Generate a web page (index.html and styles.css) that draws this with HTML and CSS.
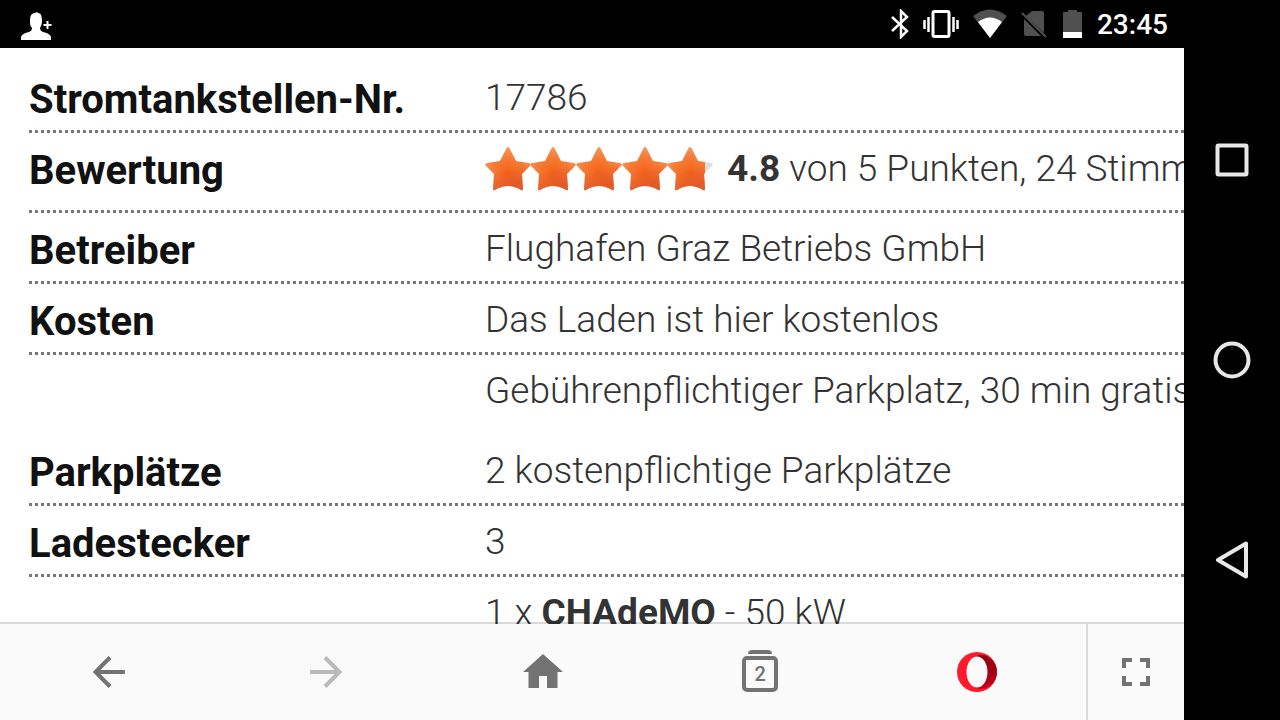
FILE: index.html
```html
<!DOCTYPE html>
<html lang="de">
  <head>
    <meta charset="UTF-8" />
    <meta name="viewport" content="width=device-width, initial-scale=1.0" />
    <title>Stromtankstelle 17786</title>
    <link rel="stylesheet" href="styles.css">
  </head>
  <body>
    <div class="screen">
      <header class="status-bar">
        <svg width="34" height="32" viewBox="0 0 34 32" fill="#fff">
          <path d="M1 32v-3c1-3 4-4 8-5 2-1 3-2 3-4-2-2-2-4-2-7 0-6 2-8 5-8l2-1 1 1c3 0 4 3 4 8 0 3-1 5-2 7 0 2 1 3 3 4 4 1 7 2 8 5v3z" />
          <path d="M26.500 13h2v3h3v2h-3v3h-2v-3h-3v-2h3z" />
        </svg>
        <div class="status-icons">
          <svg width="18" height="30" viewBox="0 0 18 30" fill="none" stroke="#fff" stroke-width="2.500">
            <path d="M1 8l15 14-6 6V2l6 6L1 22" />
          </svg>
          <svg width="36" height="30" viewBox="0 0 36 30" fill="none" stroke="#fff" stroke-width="2.500">
            <rect x="10" y="2.500" width="16" height="25" rx="1.500" stroke-width="3" />
            <path d="M1.500 11v9M5.500 8v15M30.500 8v15M34.500 11v9" />
          </svg>
          <svg width="34" height="30" viewBox="0 0 34 30">
            <path d="M0 7q17-13 34 0L17 29z" fill="#505050" />
            <path d="M5 13q12-9 24 0L17 29z" fill="#fff" />
          </svg>
          <svg width="28" height="30" viewBox="0 0 28 30">
            <path d="M11 2h10q2 0 2 2v20L5 7zM3 10l17 17H5q-2 0-2-2z" fill="#505050" />
            <path d="M1 4l24 24" stroke="#505050" stroke-width="2" />
          </svg>
          <svg width="20" height="30" viewBox="0 0 20 30">
            <path d="M0 3h5V1h9v2h5v20H0z" fill="#505050" />
            <path d="M0 23h19v6H0z" fill="#fff" />
          </svg>
          <time class="clock">23:45</time>
        </div>
      </header>

      <main class="page">
        <table class="details">
          <tr>
            <th scope="row">Stromtankstellen-Nr.</th>
            <td>17786</td>
          </tr>
          <tr class="tall">
            <th scope="row">Bewertung</th>
            <td>
              <div class="rating">
                <svg class="stars" width="228" height="48" viewBox="0 0 228 48">
                  <defs>
                    <radialGradient id="orange" cx="0.5" cy="0.6" r="0.6">
                      <stop offset="0" stop-color="#f4611a" />
                      <stop offset="0.6" stop-color="#f57c36" />
                      <stop offset="1" stop-color="#f19a62" />
                    </radialGradient>
                    <linearGradient id="shade" x1="0" y1="0" x2="0.3" y2="1">
                      <stop offset="0.6" stop-color="#d94a22" stop-opacity="0" />
                      <stop offset="1" stop-color="#d94a22" stop-opacity="0.7" />
                    </linearGradient>
                    <path id="star" d="M21 4q2-4 4 0l6 12 13 2q3 1 1 3l-8 8 1 15q0 2-2 1-13-8-26 0-2 1-2-1l1-15-8-8q-2-2 1-3l13-2z" />
                    <clipPath id="score"><rect width="220" height="48" /></clipPath>
                  </defs>
                  <use href="#star" x="182" fill="#dcdfe2" />
                  <g clip-path="url(#score)" fill="url(#orange)">
                    <use href="#star" />
                    <use href="#star" x="45" />
                    <use href="#star" x="91" />
                    <use href="#star" x="137" />
                    <use href="#star" x="182" />
                  </g>
                  <g clip-path="url(#score)" fill="url(#shade)">
                    <use href="#star" />
                    <use href="#star" x="45" />
                    <use href="#star" x="91" />
                    <use href="#star" x="137" />
                    <use href="#star" x="182" />
                  </g>
                </svg>
                <span><b>4.8</b> von 5 Punkten, 24 Stimmen</span>
              </div>
            </td>
          </tr>
          <tr>
            <th scope="row">Betreiber</th>
            <td>Flughafen Graz Betriebs GmbH</td>
          </tr>
          <tr>
            <th scope="row">Kosten</th>
            <td>Das Laden ist hier kostenlos</td>
          </tr>
          <tr class="tall plain">
            <th></th>
            <td>Gebührenpflichtiger Parkplatz, 30 min gratis</td>
          </tr>
          <tr>
            <th scope="row">Parkplätze</th>
            <td>2 kostenpflichtige Parkplätze</td>
          </tr>
          <tr>
            <th scope="row">Ladestecker</th>
            <td>3</td>
          </tr>
          <tr class="plain">
            <th></th>
            <td>1 x <b>CHAdeMO</b> - 50 kW</td>
          </tr>
        </table>
      </main>

      <nav class="toolbar">
        <button aria-label="Zurück">
          <svg width="32" height="32" viewBox="0 0 32 32" fill="none" stroke="#737373" stroke-width="4">
            <path d="M17 1.500L2.500 16 17 30.500M3 16h29" />
          </svg>
        </button>
        <button aria-label="Vorwärts" disabled>
          <svg width="32" height="32" viewBox="0 0 32 32" fill="none" stroke="#b9b9b9" stroke-width="4">
            <path d="M15 1.500l14.500 14.500L15 30.500M29 16H0" />
          </svg>
        </button>
        <button aria-label="Startseite">
          <svg width="40" height="36" viewBox="0 0 40 36" fill="#737373">
            <path d="M20 0l20 18h-5.500v16H24V22h-8v12H5.500V18H0z" />
          </svg>
        </button>
        <button class="tabs" aria-label="2 Tabs">
          <span>2</span>
        </button>
        <button aria-label="Opera">
          <svg width="40" height="40" viewBox="0 0 40 40">
            <defs>
              <linearGradient id="dark" x1="0" y1="0" x2="0" y2="1">
                <stop offset="0" stop-color="#8c0010" />
                <stop offset="1" stop-color="#c1001c" />
              </linearGradient>
            </defs>
            <circle cx="20" cy="20" r="20" fill="#ff1b2d" />
            <path d="M18 5C24 1 31 4 34 7c8 7 8 19 0 26-3 3-10 6-16 2z" fill="url(#dark)" />
            <ellipse cx="20" cy="20" rx="10.500" ry="15.500" fill="#fafafa" />
          </svg>
        </button>
        <button class="fullscreen" aria-label="Vollbild">
          <svg width="28" height="28" viewBox="0 0 28 28" fill="none" stroke="#737373" stroke-width="4">
            <path d="M2 10V2h8M18 2h8v8M26 18v8h-8M10 26H2v-8" />
          </svg>
        </button>
      </nav>
    </div>

    <aside class="system-nav">
      <button aria-label="Übersicht">
        <svg width="34" height="34" viewBox="0 0 34 34" fill="none" stroke="#e8e8e8" stroke-width="4">
          <rect x="2.500" y="2.500" width="29" height="29" rx="1" />
        </svg>
      </button>
      <button aria-label="Home">
        <svg width="38" height="38" viewBox="0 0 38 38" fill="none" stroke="#e8e8e8" stroke-width="4">
          <circle cx="19" cy="19" r="16.500" />
        </svg>
      </button>
      <button aria-label="Zurück">
        <svg width="32" height="38" viewBox="0 0 32 38" fill="none" stroke="#e8e8e8" stroke-width="4" stroke-linejoin="round">
          <path d="M30 2.500v33L2 19z" />
        </svg>
      </button>
    </aside>
  </body>
</html>
```
FILE: styles.css
```css
body {
  margin: 0;
  display: flex;
  height: 100vh;
  background-color: #000;
  font-family: Roboto, sans-serif;
  overflow: hidden;
}

button {
  margin: 0;
  padding: 0;
  border: 0;
  background: none;
  font-family: inherit;
  display: flex;
  align-items: center;
  justify-content: center;
}

.screen {
  flex: 1;
  min-width: 0;
  display: flex;
  flex-direction: column;
  background-color: #fff;
}

/* Android status bar */
.status-bar {
  display: flex;
  align-items: center;
  justify-content: space-between;
  height: 48px;
  padding: 0 16px 0 20px;
  background-color: #000;
  color: #fff;
}

.status-icons {
  display: flex;
  align-items: center;
  gap: 14px;
}

.clock {
  font-size: 28px;
  font-weight: 500;
}

/* Charging station details */
.page {
  flex: 1;
  min-height: 0;
  padding: 14px 0 0 29px;
  overflow: hidden;
}

.details {
  width: 100%;
  border-spacing: 0;
  white-space: nowrap;
}

.details tr {
  height: 71px;
  background: repeating-linear-gradient(
      90deg,
      #777 0,
      #777 3px,
      #fff 3px,
      #fff 6px
    )
    left bottom / 100% 3px no-repeat;
}

.details .tall {
  height: 80px;
}

.details .plain {
  background: none;
}

.details th,
.details td {
  padding: 0;
  text-align: left;
  vertical-align: top;
  line-height: 48px;
}

.details th {
  min-width: 456px;
  padding-top: 14px;
  color: #111;
  font-size: 40px;
  font-weight: 700;
}

.details td {
  width: 100%;
  padding-top: 12px;
  color: #333;
  font-size: 37px;
  font-weight: 300;
}

.details b {
  font-weight: 700;
}

.rating {
  display: flex;
  gap: 14px;
}

.stars {
  flex-shrink: 0;
}

/* Browser toolbar */
.toolbar {
  position: relative;
  display: flex;
  height: 96px;
  background-color: #fafafa;
  box-shadow: 0 -2px 0 rgba(0, 0, 0, 0.15);
}

.toolbar button {
  flex: 1;
}

.toolbar .fullscreen {
  box-sizing: border-box;
  flex: 0 0 98px;
  border-left: 2px solid #d9d9d9;
}

.tabs span {
  position: relative;
  width: 28px;
  height: 28px;
  margin-top: 4px;
  border: 4px solid #737373;
  border-radius: 5px;
  color: #737373;
  font-size: 20px;
  font-weight: 500;
  line-height: 28px;
}

.tabs span::before {
  content: "";
  position: absolute;
  top: -10px;
  left: 2px;
  width: 24px;
  height: 4px;
  border-radius: 4px 4px 0 0;
  background-color: #737373;
}

/* Android navigation keys */
.system-nav {
  flex: 0 0 96px;
  display: flex;
  flex-direction: column;
  justify-content: center;
}

.system-nav button {
  height: 200px;
}
```
